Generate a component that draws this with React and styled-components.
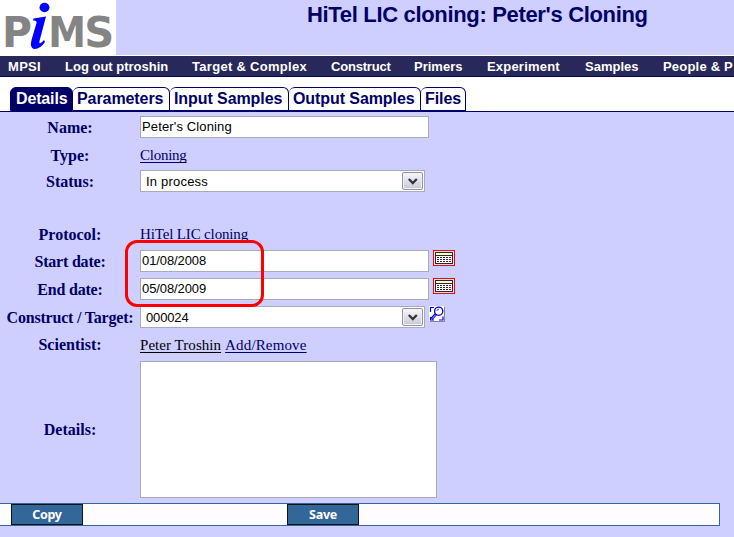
import React from "react";
import styled, { createGlobalStyle } from "styled-components";

const Global = createGlobalStyle`
  *, *::before, *::after { box-sizing: border-box; }
  html, body { margin: 0; height: 537px; overflow: hidden; background: #cfcfff; }
  a { color: inherit; }
`;

const sans = `"Liberation Sans", Arial, sans-serif`;
const serif = `"Liberation Serif", "Times New Roman", serif`;

const Page = styled.div`
  width: 734px;
  height: 537px;
  overflow: hidden;
  background: #cfcfff;
  color: #000066;
  font-family: ${serif};
`;

const Header = styled.header`
  display: flex;
  height: 56px;
  border-bottom: 1px solid #fff;
`;

const LogoBox = styled.div`
  width: 116px;
  height: 55px;
  background: #fff;
  svg { display: block; overflow: visible; }
`;

const Title = styled.h1`
  margin: 0 0 0 191px;
  font: bold 22px/29px ${sans};
  letter-spacing: ${(p) => p.$spacing}px;
  white-space: nowrap;
`;

const Nav = styled.nav`
  display: flex;
  height: 21px;
  padding-left: 8px;
  background: #28285a;
  border-bottom: 1px solid #000052;
`;

const NavItem = styled.span`
  flex: none;
  width: ${(p) => p.$width}px;
  color: #fff;
  font: bold 13px/21px ${sans};
  letter-spacing: ${(p) => p.$spacing}px;
  white-space: nowrap;
`;

const TabBar = styled.div`
  display: flex;
  align-items: flex-start;
  height: 35px;
  padding: 10px 0 0 10px;
  background: #fff;
  border-bottom: 1px solid #000066;
`;

const Tab = styled.div`
  flex: none;
  width: ${(p) => p.$width}px;
  height: 24px;
  padding-left: ${(p) => (p.$active ? 5 : 4)}px;
  border: solid #000066;
  border-width: 1px 1px 1px ${(p) => (p.$active ? 1 : 0)}px;
  border-radius: 6px 6px 0 0;
  background: ${(p) => (p.$active ? "#000066" : "#fff")};
  color: ${(p) => (p.$active ? "#fff" : "#000066")};
  font: bold 16px/22px ${sans};
  letter-spacing: ${(p) => p.$spacing}px;
  white-space: nowrap;
`;

const Form = styled.div`
  position: relative;
  display: grid;
  grid-template-columns: 140px 1fr;
  grid-template-rows: 28px 27px 26px 27px 26px 28px 28px 28px 28px 141px;
  padding-top: 1px;
  height: 391px;
`;

const Label = styled.label`
  grid-column: 1;
  align-self: center;
  padding-top: ${(p) => (p.$drop ? 2 : 0)}px;
  text-align: center;
  font: bold 16px/20px ${serif};
  letter-spacing: ${(p) => p.$spacing || 0}px;
  white-space: nowrap;
`;

const Value = styled.div`
  display: flex;
  grid-column: 2;
  align-items: center;
  font-size: 15px;
  white-space: nowrap;
`;

const Spacer = styled.div`
  grid-column: 1 / -1;
`;

const Link = styled.a`
  margin-right: 4px;
  color: ${(p) => (p.$dark ? "#000" : "#000066")};
  line-height: 20px;
  letter-spacing: ${(p) => p.$spacing || 0}px;
  text-decoration: underline;
  text-underline-offset: 2px;
  text-decoration-skip-ink: none;
  text-decoration-thickness: 1px;
  cursor: pointer;
`;

const Field = styled.div`
  width: 289px;
  height: 22px;
  padding-left: 1px;
  background: #fff;
  border: 1px solid #a5acb2;
  color: #000;
  font: 13px/19px ${sans};
  letter-spacing: ${(p) => p.$spacing || 0}px;
`;

const Select = styled(Field)`
  display: flex;
  justify-content: space-between;
  width: 285px;
  padding: 1px 1px 1px 5px;
`;

const Arrow = styled.span`
  display: block;
  width: 21px;
  height: 18px;
  border: 1px solid #9393a4;
  border-radius: 2px;
  background: linear-gradient(#f7f7fc, #c7c7d8);
  box-shadow: inset 0 0 0 1px #f1f1f7;
  svg { display: block; }
`;

const Area = styled(Field)`
  width: 297px;
  height: 137px;
`;

const IconSlot = styled.span`
  display: block;
  align-self: flex-start;
  height: 16px;
  margin: 3px 0 0 ${(p) => p.$gap}px;
  svg { display: block; }
`;

const Highlight = styled.div`
  position: absolute;
  left: 125px;
  top: 128px;
  width: 139px;
  height: 67px;
  border: 3px solid #f00;
  border-radius: 12px;
`;

const Actions = styled.div`
  display: flex;
  gap: 204px;
  width: 720px;
  height: 23px;
  padding-left: 11px;
  background: #fffcff;
  border: solid #336699;
  border-width: 1px 1px 1px 0;
`;

const Button = styled.button`
  width: 72px;
  height: 21px;
  padding: 0;
  border: 1px solid #111;
  border-radius: 0;
  background: #336699;
  color: #fff;
  font: bold 12.5px/19px "Noto Sans", sans-serif;
  letter-spacing: -0.3px;
`;

const Logo = () => (
  <svg width="116" height="55" viewBox="0 0 116 55" fontWeight="bold">
    <g fill="#848484" fontFamily="DejaVu Sans, sans-serif" fontSize="42">
      <text x="2" y="47.3" textLength="30" lengthAdjust="spacingAndGlyphs">P</text>
      <text x="48.2" y="47.3" textLength="37.7" lengthAdjust="spacingAndGlyphs">M</text>
      <text x="84.2" y="47.3" textLength="30" lengthAdjust="spacingAndGlyphs">S</text>
    </g>
    <path d="M33.5 18.5L46 16.5L39.5 41Q38.5 46 44 40L45 42Q40 49.5 34 49Q29.500 48 31.500 40L36.500 23Q37 20 33 20.500Z" fill="#00f" />
    <ellipse cx="44.5" cy="7.5" rx="5" ry="4.7" fill="#00f" />
  </svg>
);

const Chevron = () => (
  <svg width="19" height="16" viewBox="0 0 19 16">
    <path d="M5.8 6L9.8 10L13.8 6" fill="none" stroke="#333338" strokeWidth="2.3" />
  </svg>
);

const Calendar = () => (
  <svg width="22" height="16" viewBox="0 0 22 16" shapeRendering="crispEdges">
    <path d="M0 0H22V16H0Z" fill="#f00" />
    <path d="M1 1H21V15H1Z" fill="#dedeef" />
    <path d="M2 2H20V14H2Z" fill="#292929" />
    <path d="M3 3H19V13H3Z" fill="#fff" />
    <path d="M3 3H19V5H3Z" fill="#ffffc0" />
    <path d="M3 5H19V6H3Z" fill="#292929" />
    {[7, 9, 11].map((y) => (
      <g key={y}>
        {[4, 7, 10, 13].map((x) => (
          <rect key={x} x={x} y={y} width="2" height="1" fill="#292929" />
        ))}
        <rect x="16" y={y} width="2" height="1" fill="#e00000" />
      </g>
    ))}
  </svg>
);

const Search = () => (
  <svg width="16" height="16" viewBox="0 0 16 16">
    <path d="M1 1H16V16H1Z" fill="#85859b" />
    <path d="M0 0H15V15H0Z" fill="#fff" />
    <path d="M5 1.5H1.500V6M1.500 11V14H5M10 14H14V10.500" fill="none" stroke="#0000d8" strokeWidth="1.2" />
    <circle cx="9.700" cy="5.200" r="4.100" fill="#fff" stroke="#0000d8" strokeWidth="1.3" />
    <path d="M7.700 5Q8.200 3 10.200 3" fill="none" stroke="#0000d8" strokeWidth=".8" />
    <path d="M7 8L2.500 13" stroke="#0000d8" strokeWidth="2.700" />
    <path d="M6.500 8.800L3.200 12.500" stroke="#fff" strokeWidth=".7" />
  </svg>
);

const navItems = [
  ["MPSI", 57, 0.3], ["Log out ptroshin", 127, 0], ["Target & Complex", 139, 0.3],
  ["Construct", 83, -0.2], ["Primers", 73, 0], ["Experiment", 98, 0.2],
  ["Samples", 78, 0], ["People & P", 71, 0.2],
];

const tabs = [
  ["Details", 63, true], ["Parameters", 97], ["Input Samples", 119],
  ["Output Samples", 132], ["Files", 45],
];

const dates = [["Start date:", "01/08/2008"], ["End date:", "05/08/2009"]];

export default function App() {
  return (
    <Page>
      <Global />
      <Header>
        <LogoBox><Logo /></LogoBox>
        <Title $spacing={-0.33}>HiTel LIC cloning: Peter's Cloning</Title>
      </Header>
      <Nav>
        {navItems.map(([text, width, spacing]) => (
          <NavItem key={text} $width={width} $spacing={spacing}>{text}</NavItem>
        ))}
      </Nav>
      <TabBar>
        {tabs.map(([text, width, active]) => (
          <Tab key={text} $width={width} $active={active} $spacing={active ? -0.15 : -0.08}>{text}</Tab>
        ))}
      </TabBar>
      <Form>
        <Label $drop>Name:</Label>
        <Value><Field $spacing={0.14}>Peter's Cloning</Field></Value>
        <Label $drop>Type:</Label>
        <Value><Link $spacing={-0.25}>Cloning</Link></Value>
        <Label $drop>Status:</Label>
        <Value><Select $spacing={0.2}>In process<Arrow><Chevron /></Arrow></Select></Value>
        <Spacer />
        <Label $drop>Protocol:</Label>
        <Value><Link $spacing={-0.15}>HiTel LIC cloning</Link></Value>
        {dates.map(([label, value]) => (
          <React.Fragment key={label}>
            <Label $drop $spacing={-0.2}>{label}</Label>
            <Value>
              <Field $spacing={-0.1}>{value}</Field>
              <IconSlot $gap={4}><Calendar /></IconSlot>
            </Value>
          </React.Fragment>
        ))}
        <Label $drop $spacing={-0.2}>Construct / Target:</Label>
        <Value>
          <Select $spacing={-0.15}>000024<Arrow><Chevron /></Arrow></Select>
          <IconSlot $gap={4}><Search /></IconSlot>
        </Value>
        <Label>Scientist:</Label>
        <Value><Link $dark $spacing={0.05}>Peter Troshin</Link><Link $spacing={0.15}>Add/Remove</Link></Value>
        <Label>Details:</Label>
        <Value><Area /></Value>
        <Highlight />
      </Form>
      <Actions>
        <Button>Copy</Button>
        <Button>Save</Button>
      </Actions>
    </Page>
  );
}
